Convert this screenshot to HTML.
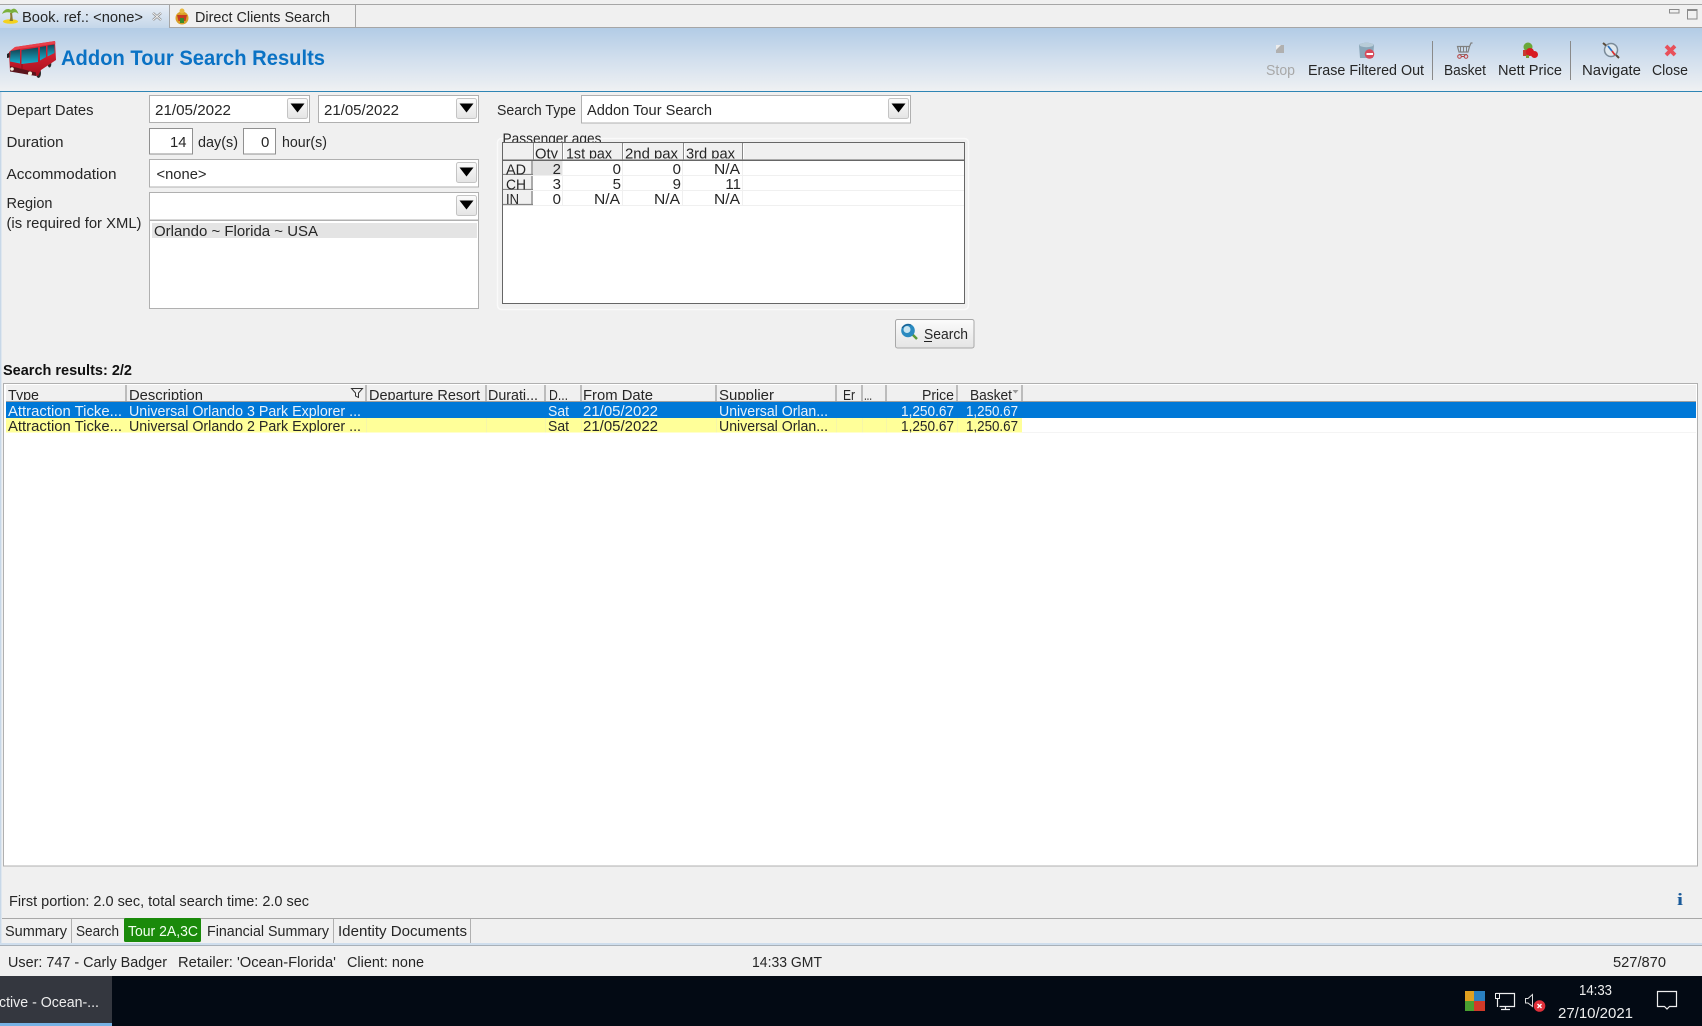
<!DOCTYPE html>
<html><head><meta charset="utf-8"><title>Addon Tour Search Results</title>
<style>
html,body{margin:0;padding:0;background:#f0f0f0;width:1702px;height:1026px;overflow:hidden}
svg{display:block;position:absolute;left:0;top:0;filter:blur(.3px)}
text{font-family:"Liberation Sans",sans-serif;font-size:15px;fill:#262626;white-space:pre}
</style></head><body>
<svg width="1702" height="1026" viewBox="0 0 1702 1026" xmlns="http://www.w3.org/2000/svg">
<defs>
<linearGradient id="hd" x1="0" y1="0" x2="0" y2="1"><stop offset="0" stop-color="#b3cce6"/><stop offset=".55" stop-color="#d5e1ee"/><stop offset="1" stop-color="#eff1f3"/></linearGradient>
<linearGradient id="tb" x1="0" y1="0" x2="0" y2="1"><stop offset="0" stop-color="#e8eef5"/><stop offset="1" stop-color="#c4d6e9"/></linearGradient>
<linearGradient id="bt" x1="0" y1="0" x2="0" y2="1"><stop offset="0" stop-color="#fbfbfb"/><stop offset="1" stop-color="#e4e4e4"/></linearGradient>
<linearGradient id="bus" x1="0" y1="0" x2="0" y2="1"><stop offset="0" stop-color="#e8283a"/><stop offset="1" stop-color="#a8101e"/></linearGradient>
<linearGradient id="gl" x1="0" y1="0" x2="0" y2="1"><stop offset="0" stop-color="#124656"/><stop offset="1" stop-color="#18b0d0"/></linearGradient>
<g id="dd"><rect x=".5" y=".5" width="20" height="20" rx="2" fill="url(#bt)" stroke="#c4c4c4"/><path d="M3.500 5.500H17.500L10.500 14.500Z" fill="#000"/></g>
<clipPath id="c1"><rect x="0" y="130" width="1702" height="12.600"/></clipPath>
<clipPath id="c2"><rect x="503" y="143" width="462" height="15.500"/></clipPath>
<clipPath id="c3"><rect x="503" y="161" width="60" height="13.500"/></clipPath>
<clipPath id="c4"><rect x="503" y="176" width="60" height="13.500"/></clipPath>
<clipPath id="c5"><rect x="6" y="385" width="1690" height="15"/></clipPath>
<clipPath id="c6"><rect x="6" y="418" width="1690" height="14.500"/></clipPath>
<clipPath id="c7"><rect x="0" y="977" width="112" height="48"/></clipPath>
</defs>

<rect width="1702" height="1026" fill="#f0f0f0"/>

<!-- top tabs -->
<rect x="0" y="4" width="1702" height="1" fill="#a6a6a6"/>
<rect x="0" y="27" width="1702" height="1" fill="#a6a6a6"/>
<rect x="0" y="5" width="169" height="23" fill="url(#tb)"/>
<rect x="169" y="5" width="1" height="22" fill="#a6a6a6"/>
<rect x="355" y="5" width="1" height="22" fill="#a6a6a6"/>
<!-- palm -->
<ellipse cx="10.500" cy="21.500" rx="7.500" ry="2.300" fill="#f4d21e"/>
<path d="M9.500 21C10.500 18 10.500 16 10 13L12 13C12.500 16 12.500 18 13 21Z" fill="#8a7a30"/>
<path d="M2 14C4 9 8 8 11 10C14 7 17 9 18.500 14C16 11.500 13.500 12 12 13.500C9 11.500 5 12 2 14Z" fill="#7ab03c"/>
<text x="22" y="22" textLength="121" lengthAdjust="spacingAndGlyphs">Book. ref.: &lt;none&gt;</text>
<path d="M153 13L161 20M161 13L153 20" stroke="#8a8a8a" stroke-width="2.400"/>
<path d="M153 13L161 20M161 13L153 20" stroke="#f4f4f4" stroke-width=".9"/>
<!-- direct clients icon -->
<circle cx="182" cy="18" r="6.500" fill="#d9a028"/><circle cx="182" cy="11" r="2.500" fill="#e8b840"/><path d="M177 15H187L185.500 21H178.500Z" fill="#c83a20"/><rect x="180" y="18" width="4" height="5" fill="#3a8a2c"/>
<text x="195" y="22" textLength="135" lengthAdjust="spacingAndGlyphs">Direct Clients Search</text>
<rect x="1669.500" y="9.500" width="9.500" height="3.500" fill="none" stroke="#8a8a8a"/>
<rect x="1687.500" y="9.500" width="9.500" height="9.500" fill="none" stroke="#8a8a8a"/>
<rect x="1687" y="9" width="10" height="2" fill="#8a8a8a"/>

<!-- header -->
<rect x="0" y="28" width="1702" height="63" fill="url(#hd)"/>
<rect x="0" y="91" width="1702" height="1" fill="#2f85b4"/>
<!-- bus -->
<g>
<ellipse cx="38.500" cy="73" rx="2.500" ry="5" fill="#2a2a2a"/><ellipse cx="49.500" cy="64" rx="1.800" ry="3.500" fill="#2a2a2a"/>
<path d="M9 52L15 47L55 41L56 60L41 70L38 76L10 71Z" fill="url(#bus)"/>
<path d="M15 47L55 41L55.500 43.500L19 49L10 51Z" fill="#e8404a"/>
<path d="M10.500 51L20 49.500L20 63.500L10 61.500Z" fill="url(#gl)"/>
<path d="M21.500 50L38 47.500L38 62L21.500 64Z" fill="url(#gl)"/>
<path d="M40 47L46 46L46 57L40 60.500Z" fill="url(#gl)"/>
<path d="M47.500 45.500L54.500 44.500L54.500 53L47.500 56.500Z" fill="url(#gl)"/>
<path d="M10 66L36 72.500L36 76L10 71.500Z" fill="#5a141c"/>
<path d="M22 64V70" stroke="#7a1018" stroke-width=".8"/>
<circle cx="12" cy="69" r="1.800" fill="#f4f0dc"/><circle cx="30" cy="73.500" r="2" fill="#f4f0dc"/>
<path d="M7 54L9.500 52.500L9.500 57.500L7 58Z" fill="#222"/>
</g>
<text x="61" y="65" textLength="264" lengthAdjust="spacingAndGlyphs" style="font-size:21px;font-weight:bold;fill:#0a72c4">Addon Tour Search Results</text>

<!-- toolbar -->
<rect x="1276" y="45" width="8" height="8" fill="#b0b0b0"/><path d="M1276 45H1281L1276 50Z" fill="#ececec"/>
<text x="1266" y="75" textLength="29" lengthAdjust="spacingAndGlyphs" style="fill:#a8a8a8">Stop</text>
<path d="M1359 45C1361 42 1372 42 1374 45L1373 58H1360Z" fill="#8aa6b8"/><ellipse cx="1366.500" cy="45" rx="7" ry="2.200" fill="#b8ccd8"/>
<circle cx="1369.500" cy="54" r="4.800" fill="#d84a5a"/><rect x="1366.500" y="53" width="6.500" height="2" fill="#fff"/>
<text x="1308" y="75" textLength="116" lengthAdjust="spacingAndGlyphs">Erase Filtered Out</text>
<rect x="1432" y="41" width="1" height="39" fill="#8a8a8a"/>
<path d="M1457.500 46.500H1469.500L1468 52H1459ZM1469.500 46.500L1471 43H1472.500" fill="none" stroke="#808080" stroke-width="1.200"/>
<path d="M1460.500 47V52M1463.500 47V52M1466.500 47V52M1459 54.500H1467" stroke="#808080" stroke-width="1"/>
<circle cx="1459.500" cy="56.500" r="1.800" fill="none" stroke="#b84040"/><circle cx="1466" cy="56.500" r="1.800" fill="none" stroke="#b84040"/><path d="M1461 56.500H1464.500" stroke="#b84040"/>
<text x="1444" y="75" textLength="42" lengthAdjust="spacingAndGlyphs">Basket</text>
<circle cx="1528" cy="47" r="4.500" fill="#6aa83a"/><rect x="1523" y="50" width="7" height="6" fill="#c83a30"/><circle cx="1530" cy="52" r="4" fill="#d81a22"/><circle cx="1534.500" cy="54.500" r="3.500" fill="#d81a22"/><rect x="1526" y="55" width="3" height="3" fill="#7a9a30"/>
<text x="1498" y="75" textLength="64" lengthAdjust="spacingAndGlyphs">Nett Price</text>
<rect x="1570" y="41" width="1" height="39" fill="#8a8a8a"/>
<circle cx="1611" cy="50" r="6.500" fill="#dfe8ee" stroke="#7a8a98" stroke-width="1.500"/>
<path d="M1603 43L1606 45.500M1616 55L1619 58" stroke="#5a4a3a" stroke-width="2"/>
<path d="M1608 46L1612 51" stroke="#2a70c0" stroke-width="1.800"/><path d="M1612 51L1615 55" stroke="#d83030" stroke-width="1.800"/>
<text x="1582" y="75" textLength="59" lengthAdjust="spacingAndGlyphs">Navigate</text>
<path d="M1666 46L1675 55M1675 46L1666 55" stroke="#e8505a" stroke-width="3.800"/>
<text x="1652" y="75" textLength="36" lengthAdjust="spacingAndGlyphs">Close</text>

<!-- left edge -->
<rect x="0" y="92" width="1" height="853" fill="#c8d8e8"/>
<rect x="1" y="92" width="1" height="853" fill="#dfe7ef"/>

<!-- form labels -->
<text x="6.500" y="115" textLength="87" lengthAdjust="spacingAndGlyphs">Depart Dates</text>
<text x="6.500" y="147" textLength="57" lengthAdjust="spacingAndGlyphs">Duration</text>
<text x="6.500" y="179" textLength="110" lengthAdjust="spacingAndGlyphs">Accommodation</text>
<text x="6.500" y="208" textLength="46" lengthAdjust="spacingAndGlyphs">Region</text>
<text x="6.500" y="228" textLength="135" lengthAdjust="spacingAndGlyphs">(is required for XML)</text>

<!-- date boxes -->
<rect x="149.500" y="95.500" width="160" height="27" fill="#fff" stroke="#b0b0b0"/>
<text x="155" y="115" textLength="76" lengthAdjust="spacingAndGlyphs">21/05/2022</text>
<use href="#dd" x="287" y="98"/>
<rect x="318.500" y="95.500" width="160" height="27" fill="#fff" stroke="#b0b0b0"/>
<text x="324" y="115" textLength="75" lengthAdjust="spacingAndGlyphs">21/05/2022</text>
<use href="#dd" x="456" y="98"/>

<!-- duration -->
<rect x="149.500" y="128.500" width="43" height="25.500" fill="#fff" stroke="#909090"/>
<text x="170" y="147" textLength="16.500" lengthAdjust="spacingAndGlyphs">14</text>
<text x="198" y="147" textLength="40" lengthAdjust="spacingAndGlyphs">day(s)</text>
<rect x="243.500" y="128.500" width="32" height="25.500" fill="#fff" stroke="#909090"/>
<text x="261" y="147">0</text>
<text x="282" y="147" textLength="45" lengthAdjust="spacingAndGlyphs">hour(s)</text>

<!-- accommodation -->
<rect x="149.500" y="159.500" width="329" height="27.500" fill="#fff" stroke="#b0b0b0"/>
<text x="156.500" y="179" textLength="50" lengthAdjust="spacingAndGlyphs">&lt;none&gt;</text>
<use href="#dd" x="456" y="162"/>

<!-- region -->
<rect x="149.500" y="192.500" width="329" height="27.500" fill="#fff" stroke="#b0b0b0"/>
<use href="#dd" x="456" y="195"/>
<rect x="149.500" y="220.500" width="329" height="88" fill="#fff" stroke="#b0b0b0"/>
<rect x="152" y="223" width="325" height="15" fill="#e4e4e4"/>
<text x="154" y="236" textLength="164" lengthAdjust="spacingAndGlyphs">Orlando ~ Florida ~ USA</text>

<!-- search type -->
<text x="497" y="115" textLength="79" lengthAdjust="spacingAndGlyphs">Search Type</text>
<rect x="581.500" y="95.500" width="329" height="27.500" fill="#fff" stroke="#b0b0b0"/>
<text x="587" y="115" textLength="125" lengthAdjust="spacingAndGlyphs">Addon Tour Search</text>
<use href="#dd" x="888" y="98"/>

<!-- passenger ages -->
<rect x="497.500" y="138.500" width="471" height="171" rx="4" fill="none" stroke="#fafafa" stroke-width="1.500"/>
<g clip-path="url(#c1)"><text x="502.500" y="143.500" textLength="99" lengthAdjust="spacingAndGlyphs">Passenger ages</text></g>
<rect x="502.500" y="142.500" width="462" height="161" fill="#fff" stroke="#666"/>
<rect x="503" y="143" width="461" height="16.500" fill="#f0f0f0"/>
<rect x="503" y="159.500" width="461" height="1.500" fill="#666"/>
<path d="M533.500 143V160M562.500 143V160M622.500 143V160M683.500 143V160M742.500 143V160" stroke="#888"/>
<path d="M534.500 144V159M563.500 144V159M623.500 144V159M684.500 144V159M743.500 144V159" stroke="#fff"/>
<g clip-path="url(#c2)">
<text x="535" y="158.500" textLength="23" lengthAdjust="spacingAndGlyphs">Qty</text>
<text x="566" y="158.500" textLength="46" lengthAdjust="spacingAndGlyphs">1st pax</text>
<text x="625" y="158.500" textLength="53" lengthAdjust="spacingAndGlyphs">2nd pax</text>
<text x="686" y="158.500" textLength="49" lengthAdjust="spacingAndGlyphs">3rd pax</text>
</g>
<path d="M533 175.500H964M533 190.500H964M503 205.500H964M562.500 161V205M622.500 161V205M682.500 161V205M742.500 161V205" stroke="#f0f0f0"/>
<rect x="533" y="161" width="29" height="14" fill="#e3e3e3"/>
<g fill="#f0f0f0">
<rect x="503" y="161" width="30" height="14"/><rect x="503" y="176" width="30" height="14"/><rect x="503" y="191" width="30" height="14"/>
</g>
<path d="M532 161V175M503 174.500H533M532 176V190M503 189.500H533M532 191V205M503 204.500H533" stroke="#858585" stroke-width="1.300"/>
<g clip-path="url(#c3)"><text x="506" y="174.500" textLength="20" lengthAdjust="spacingAndGlyphs">AD</text></g>
<g clip-path="url(#c4)"><text x="506" y="189.500" textLength="20" lengthAdjust="spacingAndGlyphs">CH</text></g>
<text x="506" y="204" textLength="13" lengthAdjust="spacingAndGlyphs">IN</text>
<text x="561" y="174" text-anchor="end">2</text>
<text x="621" y="174" text-anchor="end">0</text>
<text x="681" y="174" text-anchor="end">0</text>
<text x="714" y="174" textLength="26" lengthAdjust="spacingAndGlyphs">N/A</text>
<text x="561" y="189" text-anchor="end">3</text>
<text x="621" y="189" text-anchor="end">5</text>
<text x="681" y="189" text-anchor="end">9</text>
<text x="741" y="189" text-anchor="end">11</text>
<text x="561" y="204" text-anchor="end">0</text>
<text x="594" y="204" textLength="26" lengthAdjust="spacingAndGlyphs">N/A</text>
<text x="654" y="204" textLength="26" lengthAdjust="spacingAndGlyphs">N/A</text>
<text x="714" y="204" textLength="26" lengthAdjust="spacingAndGlyphs">N/A</text>

<!-- search button -->
<rect x="895.500" y="319.500" width="78.500" height="28.500" rx="2" fill="url(#bt)" stroke="#a8a8a8"/>
<path d="M911 333L917 339" stroke="#5a9a3a" stroke-width="2.500"/>
<circle cx="908" cy="330.500" r="6.800" fill="#2a8ac0"/><circle cx="907" cy="329.500" r="3.500" fill="#c8e4f0"/><path d="M902 328C904 325 908 324 911 325" stroke="#1a5a8a" fill="none"/>
<text x="924" y="339" textLength="44" lengthAdjust="spacingAndGlyphs">Search</text>
<rect x="924" y="341" width="8" height="1" fill="#222"/>

<!-- results -->
<text x="3" y="375" textLength="129" lengthAdjust="spacingAndGlyphs" style="font-weight:bold;fill:#111">Search results: 2/2</text>
<rect x="3.500" y="383.500" width="1694" height="482.500" fill="#fff" stroke="#b0b0b0"/>
<rect x="6" y="385" width="1690" height="17" fill="#f0f0f0"/>
<rect x="6" y="401" width="1690" height="1.500" fill="#a0a0a0"/>
<path d="M126 385V402M366 385V402M486 385V402M545 385V402M581 385V402M716 385V402M836 385V402M862 385V402M886 385V402M957 385V402M1022 385V402" stroke="#999" stroke-width="1.200"/>
<g clip-path="url(#c5)">
<text x="8" y="400" textLength="31" lengthAdjust="spacingAndGlyphs">Type</text>
<text x="129" y="400" textLength="74" lengthAdjust="spacingAndGlyphs">Description</text>
<text x="369" y="400" textLength="111" lengthAdjust="spacingAndGlyphs">Departure Resort</text>
<text x="488" y="400" textLength="50" lengthAdjust="spacingAndGlyphs">Durati...</text>
<text x="549" y="400" textLength="19" lengthAdjust="spacingAndGlyphs">D...</text>
<text x="583" y="400" textLength="70" lengthAdjust="spacingAndGlyphs">From Date</text>
<text x="719" y="400" textLength="55" lengthAdjust="spacingAndGlyphs">Supplier</text>
<text x="843" y="400" textLength="12" lengthAdjust="spacingAndGlyphs">Er</text>
<text x="864" y="400" textLength="8" lengthAdjust="spacingAndGlyphs">...</text>
<text x="922" y="400" textLength="32" lengthAdjust="spacingAndGlyphs">Price</text>
<text x="970" y="400" textLength="42" lengthAdjust="spacingAndGlyphs">Basket</text>
</g>
<path d="M351.500 388.500H362.500L358.500 393V397.500L355.500 396V393Z" fill="none" stroke="#333"/>
<path d="M1012.500 390H1018.500L1015.500 393.500Z" fill="#999"/>

<rect x="6" y="402" width="1690" height="16" fill="#0078d7"/>
<rect x="6" y="418" width="1016" height="14.500" fill="#ffff99"/>
<path d="M1022 432.500H1696" stroke="#f4f4f4"/>
<path d="M366.500 418V432.500M486.500 418V432.500M545.500 418V432.500M581.500 418V432.500M716.500 418V432.500M836.500 418V432.500M862.500 418V432.500M886.500 418V432.500M957.500 418V432.500" stroke="#f6f6a8"/>
<g>
<text style="fill:#e8f2fb" x="8" y="416" textLength="114" lengthAdjust="spacingAndGlyphs">Attraction Ticke...</text>
<text style="fill:#e8f2fb" x="129" y="416" textLength="232" lengthAdjust="spacingAndGlyphs">Universal Orlando 3 Park Explorer ...</text>
<text style="fill:#e8f2fb" x="548" y="416" textLength="21" lengthAdjust="spacingAndGlyphs">Sat</text>
<text style="fill:#e8f2fb" x="583" y="416" textLength="75" lengthAdjust="spacingAndGlyphs">21/05/2022</text>
<text style="fill:#e8f2fb" x="719" y="416" textLength="109" lengthAdjust="spacingAndGlyphs">Universal Orlan...</text>
<text style="fill:#e8f2fb" x="901" y="416" textLength="53" lengthAdjust="spacingAndGlyphs">1,250.67</text>
<text style="fill:#e8f2fb" x="966" y="416" textLength="52" lengthAdjust="spacingAndGlyphs">1,250.67</text>
</g>
<g clip-path="url(#c6)">
<text x="8" y="431" textLength="114" lengthAdjust="spacingAndGlyphs">Attraction Ticke...</text>
<text x="129" y="431" textLength="232" lengthAdjust="spacingAndGlyphs">Universal Orlando 2 Park Explorer ...</text>
<text x="548" y="431" textLength="21" lengthAdjust="spacingAndGlyphs">Sat</text>
<text x="583" y="431" textLength="75" lengthAdjust="spacingAndGlyphs">21/05/2022</text>
<text x="719" y="431" textLength="109" lengthAdjust="spacingAndGlyphs">Universal Orlan...</text>
<text x="901" y="431" textLength="53" lengthAdjust="spacingAndGlyphs">1,250.67</text>
<text x="966" y="431" textLength="52" lengthAdjust="spacingAndGlyphs">1,250.67</text>
</g>

<!-- footer info -->
<text x="9" y="906" textLength="300" lengthAdjust="spacingAndGlyphs">First portion: 2.0 sec, total search time: 2.0 sec</text>
<text x="1677" y="905" textLength="6" lengthAdjust="spacingAndGlyphs" style="font-family:'Liberation Serif',serif;font-weight:bold;font-size:17px;fill:#1a5a9a">i</text>

<!-- bottom tabs -->
<rect x="2" y="918" width="1700" height="1" fill="#a8a8a8"/>
<rect x="0" y="943" width="1702" height="2" fill="#cfdeed"/>
<rect x="0" y="945" width="1702" height="1" fill="#a8b0b8"/>
<path d="M71.500 919V943M333.500 919V943M470.500 919V943" stroke="#b0b0b0"/>
<rect x="124" y="918" width="77" height="24" rx="1.500" fill="#1a8a0a"/>
<text x="5" y="936" textLength="62" lengthAdjust="spacingAndGlyphs">Summary</text>
<text x="76" y="936" textLength="43" lengthAdjust="spacingAndGlyphs">Search</text>
<text x="128" y="936" textLength="70" lengthAdjust="spacingAndGlyphs" style="fill:#f2fff0">Tour 2A,3C</text>
<text x="207" y="936" textLength="122" lengthAdjust="spacingAndGlyphs">Financial Summary</text>
<text x="338" y="936" textLength="129" lengthAdjust="spacingAndGlyphs">Identity Documents</text>

<!-- status bar -->
<text x="8" y="967" textLength="159" lengthAdjust="spacingAndGlyphs">User: 747 - Carly Badger</text>
<text x="178" y="967" textLength="158" lengthAdjust="spacingAndGlyphs">Retailer: 'Ocean-Florida'</text>
<text x="347" y="967" textLength="77" lengthAdjust="spacingAndGlyphs">Client: none</text>
<text x="752" y="967" textLength="70" lengthAdjust="spacingAndGlyphs">14:33 GMT</text>
<text x="1613" y="967" textLength="53" lengthAdjust="spacingAndGlyphs">527/870</text>

<!-- taskbar -->
<rect x="0" y="976" width="1702" height="50" fill="#030a14"/>
<rect x="0" y="976" width="112" height="50" fill="#34373f"/>
<rect x="0" y="1023" width="112" height="3" fill="#76b2e4"/>
<g clip-path="url(#c7)"><text x="-1" y="1007" textLength="100" lengthAdjust="spacingAndGlyphs" style="fill:#eee">ctive - Ocean-...</text></g>
<!-- tray -->
<rect x="1465" y="991" width="9" height="10" fill="#e0a020"/><rect x="1474" y="991" width="11" height="10" fill="#2a80c0"/><rect x="1465" y="1001" width="9" height="10" fill="#4aa030"/><rect x="1474" y="1001" width="11" height="10" fill="#d03a28"/>
<path d="M1496 993.500H1514.500V1006.500H1499.500" fill="none" stroke="#eee" stroke-width="1.200"/>
<rect x="1495.500" y="993.500" width="4" height="5" fill="#030a14" stroke="#eee"/>
<path d="M1497.500 999V1007M1505.500 1007V1009.500M1501 1009.500H1510" fill="none" stroke="#eee" stroke-width="1.200"/>
<path d="M1525.500 998.500H1528L1532.500 994.500V1006.500L1528 1003H1525.500Z" fill="none" stroke="#ddd"/>
<circle cx="1539.500" cy="1006" r="5.800" fill="#e0303a"/><path d="M1537.500 1004L1541.500 1008M1541.500 1004L1537.500 1008" stroke="#fff" stroke-width="1.400"/>
<text x="1579" y="995" textLength="33" lengthAdjust="spacingAndGlyphs" style="fill:#eee">14:33</text>
<text x="1558" y="1018" textLength="75" lengthAdjust="spacingAndGlyphs" style="fill:#eee">27/10/2021</text>
<path d="M1657.500 991.500H1676.500V1006.500H1669.500L1667 1009L1664.500 1006.500H1657.500Z" fill="none" stroke="#eee" stroke-width="1.200"/>
</svg>
</body></html>
